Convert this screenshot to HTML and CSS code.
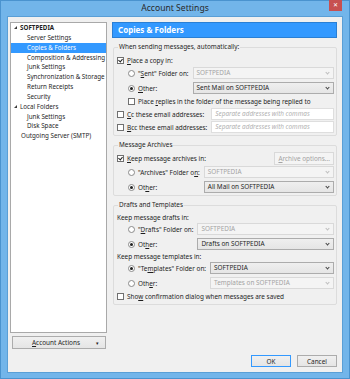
FILE: index.html
```html
<!DOCTYPE html>
<html lang="en">
<head>
      <meta charset="UTF-8">
      <meta name="viewport" content="width=device-width, initial-scale=1.0">
      <title>Account Settings</title>
      <link rel="stylesheet" href="styles.css">
</head>
<body>
      <div class="window">
            <div class="titlebar">
                  <span></span>
                  <span class="title">Account Settings</span>
                  <span class="close">&#x2715;</span>
            </div>
            <div class="client">
                  <div class="main">
                        <div class="sidebar">
                              <ul class="tree">
                                    <li class="node"><span class="twisty"></span>SOFTPEDIA</li>
                                    <li class="leaf">Server Settings</li>
                                    <li class="leaf selected">Copies &amp; Folders</li>
                                    <li class="leaf">Composition &amp; Addressing</li>
                                    <li class="leaf">Junk Settings</li>
                                    <li class="leaf">Synchronization &amp; Storage</li>
                                    <li class="leaf">Return Receipts</li>
                                    <li class="leaf">Security</li>
                                    <li class="node plain"><span class="twisty"></span>Local Folders</li>
                                    <li class="leaf">Junk Settings</li>
                                    <li class="leaf">Disk Space</li>
                                    <li class="top">Outgoing Server (SMTP)</li>
                              </ul>
                              <button class="btn actions"><span><u>A</u>ccount Actions</span><span class="arrow">&#x25BE;</span></button>
                        </div>

                        <div class="content">
                              <div class="banner">Copies &amp; Folders</div>

                              <fieldset class="group">
                                    <legend>When sending messages, automatically:</legend>
                                    <div class="row"><span class="check on"></span><span><u>P</u>lace a copy in:</span></div>
                                    <div class="pair indent">
                                          <div class="row"><span class="radio"></span><span>"<u>S</u>ent" Folder on:</span></div>
                                          <div class="combo off">SOFTPEDIA</div>
                                          <div class="row"><span class="radio on"></span><span><u>O</u>ther:</span></div>
                                          <div class="combo">Sent Mail on SOFTPEDIA</div>
                                    </div>
                                    <div class="row indent"><span class="check"></span><span>Place <u>r</u>eplies in the folder of the message being replied to</span></div>
                                    <div class="pair tight">
                                          <div class="row"><span class="check"></span><span><u>C</u>c these email addresses:</span></div>
                                          <div class="field">Separate addresses with commas</div>
                                          <div class="row"><span class="check"></span><span><u>B</u>cc these email addresses:</span></div>
                                          <div class="field">Separate addresses with commas</div>
                                    </div>
                              </fieldset>

                              <fieldset class="group">
                                    <legend>Message Archives</legend>
                                    <div class="row spread">
                                          <div class="row"><span class="check on"></span><span><u>K</u>eep message archives in:</span></div>
                                          <button class="btn small" disabled><u>A</u>rchive options...</button>
                                    </div>
                                    <div class="pair indent">
                                          <div class="row"><span class="radio"></span><span>"Archives" Folder o<u>n</u>:</span></div>
                                          <div class="combo off">SOFTPEDIA</div>
                                          <div class="row"><span class="radio on"></span><span>Ot<u>h</u>er:</span></div>
                                          <div class="combo">All Mail on SOFTPEDIA</div>
                                    </div>
                              </fieldset>

                              <fieldset class="group">
                                    <legend>Drafts and Templates</legend>
                                    <div class="row caption">Keep message drafts in:</div>
                                    <div class="pair indent">
                                          <div class="row"><span class="radio"></span><span>"<u>D</u>rafts" Folder on:</span></div>
                                          <div class="combo off">SOFTPEDIA</div>
                                          <div class="row"><span class="radio on"></span><span>Ot<u>h</u>er:</span></div>
                                          <div class="combo">Drafts on SOFTPEDIA</div>
                                    </div>
                                    <div class="row caption">Keep message templates in:</div>
                                    <div class="pair indent">
                                          <div class="row"><span class="radio on"></span><span>"Te<u>m</u>plates" Folder on:</span></div>
                                          <div class="combo">SOFTPEDIA</div>
                                          <div class="row"><span class="radio"></span><span>Oth<u>e</u>r:</span></div>
                                          <div class="combo off">Templates on SOFTPEDIA</div>
                                    </div>
                                    <div class="row"><span class="check"></span><span>Sho<u>w</u> confirmation dialog when messages are saved</span></div>
                              </fieldset>
                        </div>
                  </div>

                  <div class="footer">
                        <button class="btn default">OK</button>
                        <button class="btn">Cancel</button>
                  </div>
            </div>
      </div>
</body>
</html>
```

FILE: styles.css
```css
*{
      box-sizing: border-box;
      margin: 0;
      padding: 0;
}

body{
      background-color: #6fb3e8;
      font-family: 'Noto Sans', sans-serif;
      font-size: 6.4px;
      color: #1e1e1e;
}

.window{
      width: 350px;
      height: 379px;
      display: flex;
      flex-direction: column;
      background-color: #72b5ea;
      border: 1px solid #4a93cf;
}

.titlebar{
      height: 15px;
      display: grid;
      grid-template-columns: 1fr auto 1fr;
      align-items: start;
}

.title{
      font-size: 8.6px;
      line-height: 15px;
      color: #2a2a2a;
}

.close{
      justify-self: end;
      width: 13px;
      height: 11px;
      margin-top: -1px;
      margin-right: 7px;
      background-color: #c75050;
      color: white;
      font-size: 6px;
      line-height: 11px;
      text-align: center;
}

.client{
      flex: 1;
      margin: 0 6px 5px 6px;
      background-color: #f0f0f0;
      border: 1px solid #5a9fd6;
      padding: 5px 5px 5px 2px;
      display: flex;
      flex-direction: column;
}

.main{
      flex: 1;
      display: flex;
      gap: 5px;
}

.sidebar{
      width: 97px;
      display: flex;
      flex-direction: column;
      gap: 3px;
}

.tree{
      flex: 1;
      list-style: none;
      background-color: white;
      border: 1px solid #a9a9a9;
      font-size: 6.25px;
}

.tree li{
      line-height: 9.85px;
      white-space: nowrap;
      overflow: hidden;
}

.tree .node{
      font-weight: 700;
      padding-left: 3px;
      display: flex;
      align-items: center;
      gap: 3px;
}

.tree .node.plain{
      font-weight: 400;
}

.twisty{
      width: 0;
      height: 0;
      border-left: 3px solid transparent;
      border-bottom: 3px solid #3c3c3c;
}

.tree .leaf{
      padding-left: 16px;
}

.tree .top{
      padding-left: 10px;
}

.tree .selected{
      background-color: #3399ff;
      color: white;
}

.btn{
      font-family: 'Noto Sans', sans-serif;
      font-size: 6.4px;
      color: #1e1e1e;
      height: 12px;
      border: 1px solid #acacac;
      background: linear-gradient(#f0f0f0, #e5e5e5);
      white-space: nowrap;
}

.btn:disabled{
      color: #a3a3a3;
      border-color: #d9d9d9;
      background: #f4f4f4;
}

.actions{
      margin: 0 1px 0 2px;
      height: 13px;
      display: flex;
      align-items: center;
      justify-content: space-between;
      padding: 0 6px 0 19px;
}

.arrow{
      font-size: 5px;
}

.content{
      flex: 1;
      display: flex;
      flex-direction: column;
}

.banner{
      height: 16px;
      background-color: #3399ff;
      border: 1px solid #2a7fd4;
      color: white;
      font-weight: 700;
      font-size: 8px;
      line-height: 14px;
      padding-left: 5px;
}

.group{
      border: 1px solid #dcdcdc;
      border-radius: 2px;
      margin: 4px 0 0 1px;
      padding: 2px 2px 2px 3px;
      display: flex;
      flex-direction: column;
      gap: 1px;
}

.group legend{
      padding: 0 1px;
      margin-left: 1px;
      line-height: 10px;
}

.row{
      display: flex;
      align-items: center;
      gap: 3px;
      min-height: 12px;
      white-space: nowrap;
}

.spread{
      justify-content: space-between;
}

.indent{
      padding-left: 11px;
}

.caption{
      min-height: 10px;
}

.pair{
      display: grid;
      grid-template-columns: auto 1fr;
      column-gap: 4px;
      row-gap: 3px;
      align-items: center;
}

.pair.tight{
      row-gap: 1px;
}

.check{
      width: 7px;
      height: 7px;
      border: 1px solid #707070;
      background-color: white;
      position: relative;
      flex: none;
}

.check.on::after{
      content: "";
      position: absolute;
      left: 1px;
      top: 0;
      width: 2px;
      height: 3px;
      border-right: 1px solid #222;
      border-bottom: 1px solid #222;
      transform: rotate(40deg);
}

.radio{
      width: 7px;
      height: 7px;
      border: 1px solid #8a8a8a;
      border-radius: 50%;
      background-color: white;
      flex: none;
      display: flex;
      align-items: center;
      justify-content: center;
}

.radio.on::after{
      content: "";
      width: 3px;
      height: 3px;
      border-radius: 50%;
      background-color: #222;
}

.combo{
      height: 12px;
      border: 1px solid #acacac;
      background: linear-gradient(#efefef, #e5e5e5);
      line-height: 10px;
      padding-left: 3px;
      position: relative;
}

.combo::after{
      content: "";
      position: absolute;
      right: 4px;
      top: 3px;
      width: 2px;
      height: 2px;
      border-right: 1px solid #444;
      border-bottom: 1px solid #444;
      transform: rotate(45deg);
}

.combo.off{
      background: #f4f4f4;
      border-color: #d9d9d9;
      color: #a3a3a3;
}

.combo.off::after{
      border-color: #bdbdbd;
}

.field{
      height: 12px;
      border: 1px solid #dedede;
      background-color: white;
      line-height: 10px;
      padding-left: 3px;
      font-style: italic;
      color: #b0b0b0;
}

.small{
      height: 13px;
      padding: 0 3px;
}

.footer{
      display: flex;
      justify-content: flex-end;
      gap: 6px;
      margin-top: 6px;
}

.footer .btn{
      width: 40px;
}

.default{
      border-color: #3399ff;
}
```
